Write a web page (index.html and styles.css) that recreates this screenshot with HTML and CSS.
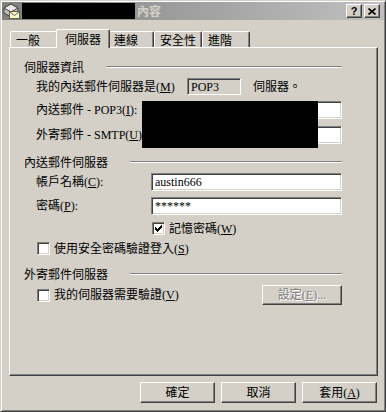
FILE: index.html
```html
<!DOCTYPE html>
<html lang="zh-Hant">

<head>
    <meta charset="UTF-8">
    <meta name="viewport" content="width=device-width, initial-scale=1.0">
    <title>內容</title>
    <link rel="stylesheet" href="styles.css">
</head>

<body>
    <div class="window">
        <div class="titlebar">
            <svg class="app-icon" width="18" height="16" viewBox="0 0 18 16">
                <polygon points="1,5 8,1 15,5 15,10 8,14 1,10" fill="#c0c0c0" stroke="#404040" />
                <polygon points="1,5 8,1 15,5 8,9" fill="#e8e8e8" stroke="#404040" />
                <rect x="6.5" y="8.5" width="10" height="7" fill="#fffbd0" stroke="#606040" />
                <path d="M6.5 8.5 L11.5 12.5 L16.5 8.5" fill="none" stroke="#606040" />
            </svg>
            <span class="title-redact"></span>
            <span class="title">內容</span>
            <div class="title-buttons">
                <button class="title-btn help">?</button>
                <button class="title-btn">
                    <svg width="8" height="7" viewBox="0 0 8 7">
                        <path d="M0.5 0.5 L7.5 6.5 M7.5 0.5 L0.5 6.5" stroke="#000" stroke-width="1.6" />
                    </svg>
                </button>
            </div>
        </div>

        <div class="client">
            <div class="tabs">
                <div class="tab tab-general">一般</div>
                <div class="tab tab-active">伺服器</div>
                <div class="tab tab-conn">連線</div>
                <div class="tab tab-sec">安全性</div>
                <div class="tab tab-adv">進階</div>
            </div>

            <div class="panel">
                <div class="group-title"><span>伺服器資訊</span><span class="rule"></span></div>
                <div class="row row-type">
                    <span class="type-label">我的內送郵件伺服器是(<u>M</u>)</span>
                    <span class="field field-readonly">POP3</span>
                    <span class="type-after">伺服器。</span>
                </div>
                <div class="masked">
                    <div class="row">
                        <span class="label">內送郵件 - POP3(<u>I</u>):</span>
                        <span class="field"></span>
                    </div>
                    <div class="row row-next">
                        <span class="label">外寄郵件 - SMTP(<u>U</u>):</span>
                        <span class="field"></span>
                    </div>
                    <div class="redact"></div>
                </div>

                <div class="group-title group-gap"><span>內送郵件伺服器</span><span class="rule"></span></div>
                <div class="row row-first">
                    <span class="label">帳戶名稱(<u>C</u>):</span>
                    <span class="field">austin666</span>
                </div>
                <div class="row row-next2">
                    <span class="label">密碼(<u>P</u>):</span>
                    <span class="field">******</span>
                </div>
                <div class="row check-row check-indent">
                    <span class="checkbox">
                        <svg width="7" height="7" viewBox="0 0 7 7">
                            <path d="M0 2h1v1h1v1h1v-1h1v-1h1v-1h1v-1h1v3h-1v1h-1v1h-1v1h-1v1h-1v-1h-1v-1h-1z" fill="#000" />
                        </svg>
                    </span>
                    <span>記憶密碼(<u>W</u>)</span>
                </div>
                <div class="row check-row">
                    <span class="checkbox"></span>
                    <span>使用安全密碼驗證登入(<u>S</u>)</span>
                </div>

                <div class="group-title group-gap2"><span>外寄郵件伺服器</span><span class="rule"></span></div>
                <div class="row row-auth">
                    <span class="checkbox"></span>
                    <span>我的伺服器需要驗證(<u>V</u>)</span>
                    <button class="button disabled">設定(<u>E</u>)...</button>
                </div>
            </div>

            <div class="actions">
                <button class="button">確定</button>
                <button class="button">取消</button>
                <button class="button">套用(<u>A</u>)</button>
            </div>
        </div>
    </div>
</body>

</html>
```

FILE: styles.css
```css
* {
    box-sizing: border-box;
}

body {
    margin: 0;
    background: #d4d0c8;
    font-family: "Liberation Serif", "Noto Sans CJK TC", serif;
    font-size: 12px;
    line-height: 14px;
    color: #000;
}

.window {
    width: 386px;
    height: 412px;
    padding: 1px;
    background: #d4d0c8;
    border: 1px solid;
    border-color: #d4d0c8 #404040 #404040 #d4d0c8;
    box-shadow: inset 1px 1px #fff, inset -1px -1px #808080;
    display: flex;
    flex-direction: column;
}

/* title bar (inactive colours) */
.titlebar {
    height: 18px;
    padding: 0 4px 0 1px;
    display: flex;
    align-items: center;
    background: linear-gradient(to right, #808080, #c0c0c0);
}

.app-icon {
    display: block;
}

.title-redact {
    width: 113px;
    height: 16px;
    margin-left: 1px;
    background: #000;
}

.title {
    margin-left: 2px;
    font-family: "Noto Sans CJK TC", sans-serif;
    font-weight: bold;
    color: #d4d0c8;
}

.title-buttons {
    margin-left: auto;
    display: flex;
    gap: 2px;
}

.title-btn {
    width: 16px;
    height: 14px;
    padding: 0;
    display: flex;
    align-items: center;
    justify-content: center;
    background: #d4d0c8;
    border: 1px solid;
    border-color: #fff #404040 #404040 #fff;
    box-shadow: inset -1px -1px #808080;
}

.help {
    font-family: "Liberation Sans", sans-serif;
    font-weight: bold;
    font-size: 11px;
    line-height: 12px;
}

.client {
    flex: 1;
    padding: 9px 6px 7px 7px;
    display: flex;
    flex-direction: column;
}

/* tabs */
.tabs {
    height: 18px;
    padding-left: 1px;
    display: flex;
    align-items: flex-end;
}

.tab {
    height: 16px;
    padding-left: 5px;
    display: flex;
    align-items: center;
    font-family: "Noto Sans CJK TC", sans-serif;
    border-top: 1px solid #fff;
    border-left: 1px solid #fff;
    border-right: 1px solid #404040;
    border-radius: 2px 2px 0 0;
    box-shadow: inset -1px 0 #808080;
    background: #d4d0c8;
}

.tab-general { width: 48px; }
.tab-conn { width: 46px; }
.tab-sec { width: 48px; }
.tab-adv { width: 48px; }

.tab-active {
    width: 54px;
    height: 19px;
    margin: 0 -2px -1px;
    padding-left: 8px;
    position: relative;
    z-index: 1;
}

/* tab page */
.panel {
    height: 329px;
    padding: 12px 35px 0 14px;
    border: 1px solid;
    border-color: #fff #404040 #404040 #fff;
    box-shadow: inset -1px -1px #808080;
}

.group-title {
    height: 14px;
    display: flex;
    align-items: center;
    font-family: "Noto Sans CJK TC", sans-serif;
}

.rule {
    flex: 1;
    margin-left: 22px;
    border-top: 1px solid #808080;
    border-bottom: 1px solid #fff;
}

.group-gap { margin-top: 11px; }
.group-gap2 { margin-top: 12px; }

.row {
    height: 18px;
    padding-left: 12px;
    display: flex;
    align-items: center;
    white-space: nowrap;
}

.row-type {
    height: 17px;
    margin-top: 4px;
}

.type-label {
    width: 151px;
}

.type-after {
    margin-left: 12px;
}

.label {
    width: 115px;
}

.field {
    flex: 1;
    height: 18px;
    padding-left: 3px;
    display: flex;
    align-items: center;
    background: #fff;
    border: 1px solid;
    border-color: #808080 #fff #fff #808080;
    box-shadow: inset 1px 1px #404040, inset -1px -1px #d4d0c8;
}

.field-readonly {
    flex: none;
    width: 54px;
    height: 17px;
    background: #d4d0c8;
}

.masked {
    position: relative;
    margin-top: 6px;
}

/* black box painted over the server names */
.redact {
    position: absolute;
    left: 118px;
    top: 0;
    width: 176px;
    height: 47px;
    background: #000;
}

.row-next { margin-top: 7px; }
.row-first { margin-top: 4px; }
.row-next2 { margin-top: 6px; }

.check-row {
    height: 13px;
    margin-top: 7px;
    gap: 4px;
}

.check-row .checkbox {
    margin-left: 1px;
}

.check-indent .checkbox {
    margin-left: 116px;
}

.checkbox {
    width: 13px;
    height: 13px;
    flex: none;
    display: flex;
    align-items: center;
    justify-content: center;
    background: #fff;
    border: 1px solid;
    border-color: #808080 #fff #fff #808080;
    box-shadow: inset 1px 1px #404040, inset -1px -1px #d4d0c8;
}

.checkbox svg {
    display: block;
}

.row-auth {
    height: 20px;
    margin-top: 4px;
    gap: 4px;
}

.row-auth .checkbox {
    margin-left: 1px;
}

.button {
    width: 75px;
    height: 21px;
    padding: 0;
    font: inherit;
    color: #000;
    background: #d4d0c8;
    border: 1px solid;
    border-color: #fff #404040 #404040 #fff;
    box-shadow: inset -1px -1px #808080;
}

.button.disabled {
    width: 80px;
    height: 20px;
    margin-left: auto;
    color: #808080;
    text-shadow: 1px 1px #fff;
}

.actions {
    margin-top: 6px;
    padding-right: 1px;
    display: flex;
    justify-content: flex-end;
    gap: 6px;
}
```
